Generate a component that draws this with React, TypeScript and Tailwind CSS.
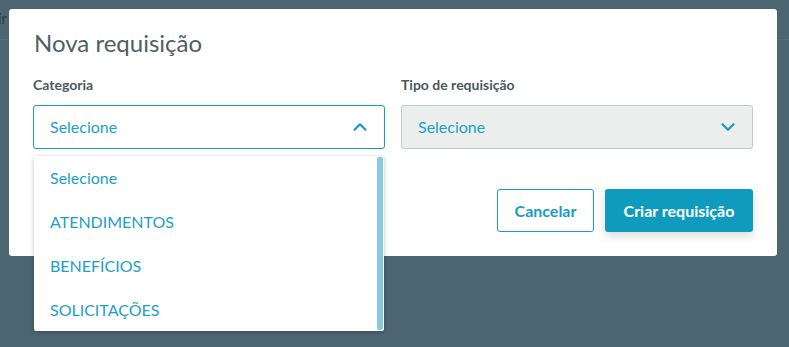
import { ChevronDown, ChevronUp } from "lucide-react";

const options = ["Selecione", "ATENDIMENTOS", "BENEFÍCIOS", "SOLICITAÇÕES"];

export default function App() {
  return (
    <div
      className="relative w-[789px] h-[347px] overflow-hidden bg-[#4b6571]"
      style={{ fontFamily: "Lato, 'Noto Sans', sans-serif" }}
    >
      {/* page behind the backdrop */}
      <div className="h-[40px] border-b border-[#56707b] pt-[7px] text-[15px] text-[#2e3d44] -ml-[2px]">
        ir
      </div>

      {/* modal */}
      <div className="absolute left-[9px] top-[9px] w-[768px] h-[247px] bg-white rounded-[3px] px-[24px] pt-[18px]">
        <h2 className="text-[24px] leading-[32px] text-[#4f5e66] ml-[1px]">Nova requisição</h2>

        <div className="mt-[17px] grid grid-cols-2 gap-x-[16px]">
          <div>
            <div className="text-[14px] font-bold text-[#4b5960] leading-[18px]">Categoria</div>
            <div className="mt-[11px] h-[44px] flex items-center justify-between border border-[#1a9cc2] rounded-[3px] pl-[16px] pr-[13px] shadow-[inset_0_1px_3px_rgba(0,0,0,0.06)]">
              <span className="text-[16px] text-[#1c9fc6]">Selecione</span>
              <ChevronUp size={22} strokeWidth={2.4} className="text-[#1a9cc2]" />
            </div>
          </div>
          <div>
            <div className="text-[14px] font-bold text-[#4b5960] leading-[18px]">Tipo de requisição</div>
            <div className="mt-[11px] h-[44px] flex items-center justify-between border border-[#c3c8c8] bg-[#eceeed] rounded-[3px] pl-[16px] pr-[13px]">
              <span className="text-[16px] text-[#1c9fc6]">Selecione</span>
              <ChevronDown size={22} strokeWidth={2.4} className="text-[#1a9cc2]" />
            </div>
          </div>
        </div>

        <div className="mt-[40px] flex justify-end gap-[11px]">
          <button className="h-[43px] w-[97px] border border-[#1a9cc2] rounded-[3px] text-[16px] font-bold text-[#1a9cc2]">
            Cancelar
          </button>
          <button className="h-[43px] w-[148px] bg-[#0f9bbe] rounded-[3px] text-[16px] font-bold text-white shadow-[0_4px_10px_rgba(0,0,0,0.15)]">
            Criar requisição
          </button>
        </div>
      </div>

      {/* open dropdown list */}
      <div className="absolute left-[34px] top-[156px] w-[350px] h-[175px] bg-white rounded-[2px] shadow-[0_1px_4px_rgba(0,0,0,0.25)] flex">
        <ul className="flex-1">
          {options.map((o) => (
            <li key={o} className="h-[44px] flex items-center pl-[16px] text-[16px] text-[#1c9fc6]">
              {o}
            </li>
          ))}
        </ul>
        <div className="w-[6px] my-[1px] mr-[1px] bg-[#85cade] rounded-[2px]" />
      </div>
    </div>
  );
}
